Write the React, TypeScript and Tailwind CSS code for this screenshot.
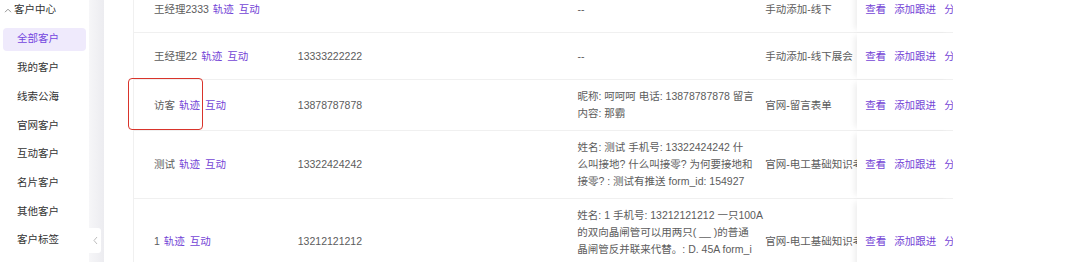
import React from 'react';

interface Row {
  name: string;
  phone: string;
  content: string[];
  source: string;
}

const rows: Row[] = [
  { name: '王经理2333', phone: '', content: ['--'], source: '手动添加-线下' },
  { name: '王经理22', phone: '13333222222', content: ['--'], source: '手动添加-线下展会' },
  { name: '访客', phone: '13878787878', content: ['昵称: 呵呵呵 电话: 13878787878 留言', '内容: 那霸'], source: '官网-留言表单' },
  {
    name: '测试',
    phone: '13322424242',
    content: ['姓名: 测试 手机号: 13322424242 什', '么叫接地? 什么叫接零? 为何要接地和', '接零? : 测试有推送 form_id: 154927'],
    source: '官网-电工基础知识考试',
  },
  {
    name: '1',
    phone: '13212121212',
    content: [
      '姓名: 1 手机号: 13212121212 一只100A',
      '的双向晶闸管可以用两只( __ )的普通',
      '晶闸管反并联来代替。: D. 45A form_i',
      'd: 154928',
    ],
    source: '官网-电工基础知识考试',
  },
];

const menu = ['全部客户', '我的客户', '线索公海', '官网客户', '互动客户', '名片客户', '其他客户', '客户标签'];

export default function App() {
  return (
    <div
      className="relative flex h-[262px] w-[1080px] overflow-hidden bg-white text-[10.5px]"
      style={{ fontFamily: '"Liberation Sans", "Noto Sans CJK SC", sans-serif' }}
    >
      {/* Sidebar */}
      <div className="w-[89px] shrink-0 bg-white">
        <div className="flex h-[20px] items-center pl-[4px] text-[#333]">
          <svg width="8" height="5" viewBox="0 0 8 5" className="mr-[2px]">
            <path d="M1 4.2 L4 1.2 L7 4.2" fill="none" stroke="#888" strokeWidth="0.9" />
          </svg>
          <span>客户中心</span>
        </div>
        <div className="mt-[5px]">
          {menu.map((m, i) => (
            <div key={m} className="flex h-[28.7px] items-center px-[3px]">
              <div
                className={
                  'flex h-[23px] w-full items-center rounded-[4px] pl-[14px] ' +
                  (i === 0 ? 'bg-[#efeafc] text-[#7446df]' : 'text-[#333]')
                }
              >
                {m}
              </div>
            </div>
          ))}
        </div>
      </div>

      {/* Collapse strip */}
      <div className="relative w-[15px] shrink-0 bg-gradient-to-r from-[#f6f6f8] to-[#ececf0]">
        <div className="absolute left-0 top-[228px] flex h-[25px] w-[12px] items-center justify-center rounded-r-[3px] bg-white">
          <svg width="5" height="9" viewBox="0 0 5 9">
            <path d="M4 1 L1 4.5 L4 8" fill="none" stroke="#b5b5b5" strokeWidth="0.9" />
          </svg>
        </div>
      </div>

      {/* Main */}
      <div className="flex-1 pl-[29px]">
        <div className="-mt-[14px] h-[300px] w-[820px] overflow-hidden border-l border-[#f0f0f0]">
          {rows.map((r) => (
            <div key={r.name} className="flex min-h-[47px] border-b border-[#f0f0f0] leading-[17px] text-[#5c5c5c]">
              <div className="flex w-[144px] items-center pl-5">
                <span>{r.name}</span>
                <span className="ml-[4px] text-[#7444d6]">轨迹</span>
                <span className="ml-[5px] text-[#7444d6]">互动</span>
              </div>
              <div className="flex w-[280px] items-center pl-5">{r.phone}</div>
              <div className="flex w-[198px] items-center py-2 pl-5">
                <div className="whitespace-nowrap">
                  {r.content.map((line) => (
                    <div key={line}>{line}</div>
                  ))}
                </div>
              </div>
              <div className="flex w-[102px] items-center overflow-hidden pl-[10px]">
                <span className="block w-[92px] overflow-hidden whitespace-nowrap">{r.source}</span>
              </div>
              <div className="flex w-[96px] items-center gap-[8px] overflow-hidden whitespace-nowrap bg-white pl-[8px] text-[#7444d6] shadow-[-5px_0_6px_-3px_rgba(0,0,0,0.08)]">
                <span>查看</span>
                <span>添加跟进</span>
                <span>分配</span>
              </div>
            </div>
          ))}
        </div>
      </div>

      {/* Annotation */}
      <div className="absolute left-[128px] top-[78px] h-[52px] w-[75px] rounded-[4px] border-[1.5px] border-[#d9342b]" />
    </div>
  );
}
